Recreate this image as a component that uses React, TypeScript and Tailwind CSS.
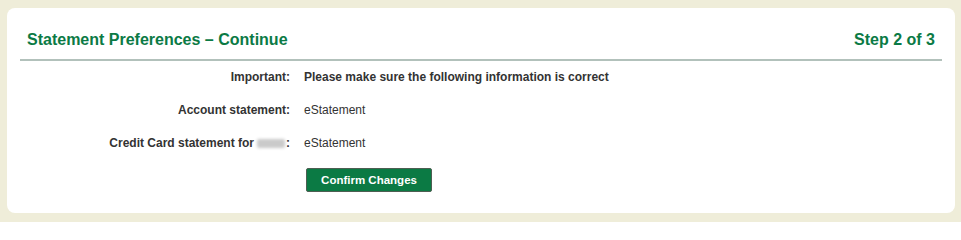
import React from "react";

export default function App() {
  const font = { fontFamily: '"Liberation Sans", Arial, sans-serif' };
  return (
    <div
      className="w-[961px] h-[222px] bg-[#efedd9] pt-[8px] pl-[7px] pr-[6px]"
      style={font}
    >
      <div className="bg-white rounded-[8px] h-[205px] px-[13px] pt-[22px]">
        <div className="flex justify-between items-start px-[7px] pb-[9px] border-b-2 border-[#b2c1bb]">
          <h1 className="text-[16px] leading-[20px] font-bold text-[#0b7a45]">
            Statement Preferences – Continue
          </h1>
          <div className="text-[16px] leading-[20px] font-bold text-[#0b7a45]">
            Step 2 of 3
          </div>
        </div>
        <div className="grid grid-cols-[270px_1fr] gap-x-[14px] gap-y-[17px] pt-[8px] text-[12px] leading-[16px] text-[#333333]">
          <div className="text-right font-bold">Important:</div>
          <div className="font-bold">
            Please make sure the following information is correct
          </div>
          <div className="text-right font-bold">Account statement:</div>
          <div>eStatement</div>
          <div className="text-right font-bold flex justify-end items-center">
            <span>Credit Card statement for</span>
            <span className="inline-block w-[28px] h-[9px] ml-[3px] bg-[#cacaca] blur-[1.5px] rounded-[2px]"></span>
            <span className="ml-[1px]">:</span>
          </div>
          <div>eStatement</div>
          <div></div>
          <div className="pl-[2px]">
            <button className="h-[24px] w-[126px] bg-[#0b7a44] border border-[#4d5e52] rounded-[2px] text-white font-bold text-[11.5px] leading-[22px]">
              Confirm Changes
            </button>
          </div>
        </div>
      </div>
    </div>
  );
}
